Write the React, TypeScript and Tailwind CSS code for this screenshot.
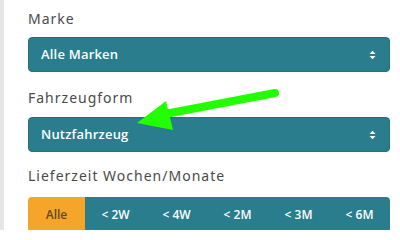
import React from 'react';

const teal = 'bg-[#2a7d8d]';

function SortIcon() {
  return (
    <svg width="7" height="10" viewBox="0 0 7 10" className="shrink-0">
      <path d="M0.5 4 L3.5 0.8 L6.5 4 Z" fill="white" />
      <path d="M0.5 6 L3.5 9.2 L6.5 6 Z" fill="white" />
    </svg>
  );
}

function Select({ value }: { value: string }) {
  return (
    <div className={`${teal} h-[35px] rounded-[4px] border border-[#25707e] flex items-center justify-between pl-[12px] pr-[13px] text-white text-[13px] font-semibold tracking-[0.2px]`} style={{ fontFamily: '"Open Sans", "Noto Sans", sans-serif' }}>
      <span>{value}</span>
      <SortIcon />
    </div>
  );
}

export default function App() {
  const ranges = ['< 2W', '< 4W', '< 2M', '< 3M', '< 6M'];
  return (
    <div className="relative w-[400px] h-[230px] bg-white overflow-hidden flex" style={{ fontFamily: '"Noto Sans", "Open Sans", sans-serif' }}>
      <div className="w-[4px] bg-[#e6e6e6]" />
      <div className="flex-1 pl-[24px] pr-[10px] pt-[10px]">
        <div className="text-[14px] text-[#4a4a4a] tracking-[1px] leading-[18px] mb-[9px]">Marke</div>
        <Select value="Alle Marken" />
        <div className="text-[14px] text-[#4a4a4a] tracking-[1px] leading-[18px] mt-[17px] mb-[10px]">Fahrzeugform</div>
        <Select value="Nutzfahrzeug" />
        <div className="text-[14px] text-[#4a4a4a] tracking-[1px] leading-[18px] mt-[15px] mb-[12px]">Lieferzeit Wochen/Monate</div>
        <div className="flex h-[35px] rounded-[4px] overflow-hidden text-[12px] font-semibold" style={{ fontFamily: '"Open Sans", "Noto Sans", sans-serif' }}>
          <div className="w-[57px] bg-[#f5a52a] text-[#5e4a28] flex items-center justify-center">Alle</div>
          {ranges.map((r) => (
            <div key={r} className={`flex-1 ${teal} text-white flex items-center justify-center`}>{r}</div>
          ))}
        </div>
      </div>
      <svg className="absolute left-0 top-0 pointer-events-none" width="400" height="230">
        <line x1="275" y1="93" x2="160" y2="115" stroke="#22ff00" strokeWidth="8" strokeLinecap="round" />
        <polygon points="137,123 166,101 173,130" fill="#22ff00" />
      </svg>
    </div>
  );
}
